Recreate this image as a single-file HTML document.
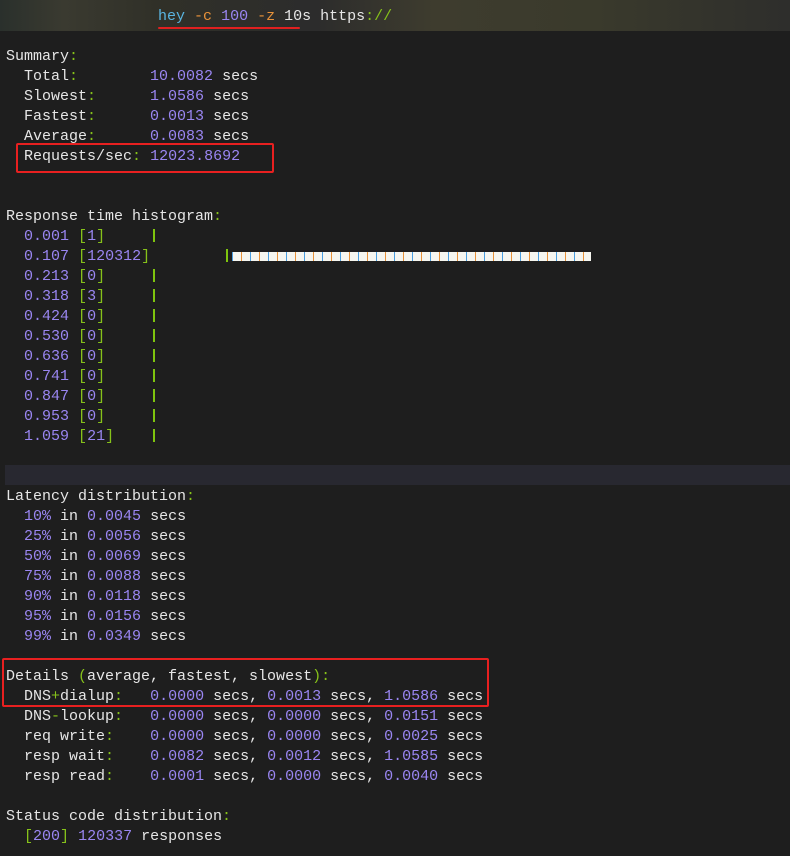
<!DOCTYPE html>
<html><head><style>
html,body{margin:0;padding:0;background:#1e1e1e;width:790px;height:856px;overflow:hidden;position:relative}
pre{margin:0;position:absolute;left:6px;top:47px;font-family:"Liberation Mono",monospace;font-size:15px;line-height:20px;color:#e6e6e6;letter-spacing:0}
.p{color:#9a86f2}.g{color:#86c21a}.o{color:#e8923a}.c{color:#5ab4e0}
.top{position:absolute;left:0;top:0;width:790px;height:31px;background:linear-gradient(90deg,#2a302c 0,#3a3a30 8%,#303028 20%,#2c2c2c 40%,#3e3c2e 55%,#3a3a2c 75%,#2e2e2c 100%)}
.cmd{position:absolute;left:158px;top:7px;font-family:"Liberation Mono",monospace;font-size:15px;line-height:20px;color:#e6e6e6;white-space:pre}
.ul{position:absolute;left:158px;top:27px;width:142px;height:2px;background:#e02020;border-radius:1px}
.band{position:absolute;left:5px;top:465px;width:785px;height:20px;background:#282830}
.box{position:absolute;border:2px solid #e82020;border-radius:2px}
.bar{position:absolute;left:232px;top:252px;width:359px;height:9px;background:repeating-linear-gradient(90deg,#4a9ee0 0,#4a9ee0 1px,#f6f6f0 1px,#f6f6f0 9px,#e8923a 9px,#e8923a 10px,#f6f6f0 10px,#f6f6f0 18px)}
.vb{position:absolute;width:2px;height:13px;background:#7ec40e}
</style></head><body>
<div class="top"></div>
<div class="cmd"><span class="c">hey</span> <span class="o">-c</span> <span class="p">100</span> <span class="o">-z</span> 10s https<span class="g">://</span></div>
<div class="ul"></div>
<div class="band"></div>
<pre>Summary<span class="g">:</span>
  Total<span class="g">:</span>        <span class="p">10.0082</span> secs
  Slowest<span class="g">:</span>      <span class="p">1.0586</span> secs
  Fastest<span class="g">:</span>      <span class="p">0.0013</span> secs
  Average<span class="g">:</span>      <span class="p">0.0083</span> secs
  Requests/sec<span class="g">:</span> <span class="p">12023.8692</span>


Response time histogram<span class="g">:</span>
  <span class="p">0.001</span> <span class="g">[</span><span class="p">1</span><span class="g">]</span>
  <span class="p">0.107</span> <span class="g">[</span><span class="p">120312</span><span class="g">]</span>
  <span class="p">0.213</span> <span class="g">[</span><span class="p">0</span><span class="g">]</span>
  <span class="p">0.318</span> <span class="g">[</span><span class="p">3</span><span class="g">]</span>
  <span class="p">0.424</span> <span class="g">[</span><span class="p">0</span><span class="g">]</span>
  <span class="p">0.530</span> <span class="g">[</span><span class="p">0</span><span class="g">]</span>
  <span class="p">0.636</span> <span class="g">[</span><span class="p">0</span><span class="g">]</span>
  <span class="p">0.741</span> <span class="g">[</span><span class="p">0</span><span class="g">]</span>
  <span class="p">0.847</span> <span class="g">[</span><span class="p">0</span><span class="g">]</span>
  <span class="p">0.953</span> <span class="g">[</span><span class="p">0</span><span class="g">]</span>
  <span class="p">1.059</span> <span class="g">[</span><span class="p">21</span><span class="g">]</span>


Latency distribution<span class="g">:</span>
  <span class="p">10%</span> in <span class="p">0.0045</span> secs
  <span class="p">25%</span> in <span class="p">0.0056</span> secs
  <span class="p">50%</span> in <span class="p">0.0069</span> secs
  <span class="p">75%</span> in <span class="p">0.0088</span> secs
  <span class="p">90%</span> in <span class="p">0.0118</span> secs
  <span class="p">95%</span> in <span class="p">0.0156</span> secs
  <span class="p">99%</span> in <span class="p">0.0349</span> secs

Details <span class="g">(</span>average, fastest, slowest<span class="g">):</span>
  DNS<span class="g">+</span>dialup<span class="g">:</span>   <span class="p">0.0000</span> secs, <span class="p">0.0013</span> secs, <span class="p">1.0586</span> secs
  DNS<span class="g">-</span>lookup<span class="g">:</span>   <span class="p">0.0000</span> secs, <span class="p">0.0000</span> secs, <span class="p">0.0151</span> secs
  req write<span class="g">:</span>    <span class="p">0.0000</span> secs, <span class="p">0.0000</span> secs, <span class="p">0.0025</span> secs
  resp wait<span class="g">:</span>    <span class="p">0.0082</span> secs, <span class="p">0.0012</span> secs, <span class="p">1.0585</span> secs
  resp read<span class="g">:</span>    <span class="p">0.0001</span> secs, <span class="p">0.0000</span> secs, <span class="p">0.0040</span> secs

Status code distribution<span class="g">:</span>
  <span class="g">[</span><span class="p">200</span><span class="g">]</span> <span class="p">120337</span> responses
</pre>
<div class="vb" style="left:153px;top:229px"></div>
<div class="vb" style="left:226px;top:249px"></div>
<div class="vb" style="left:153px;top:269px"></div>
<div class="vb" style="left:153px;top:289px"></div>
<div class="vb" style="left:153px;top:309px"></div>
<div class="vb" style="left:153px;top:329px"></div>
<div class="vb" style="left:153px;top:349px"></div>
<div class="vb" style="left:153px;top:369px"></div>
<div class="vb" style="left:153px;top:389px"></div>
<div class="vb" style="left:153px;top:409px"></div>
<div class="vb" style="left:153px;top:429px"></div>
<div class="bar"></div>
<div class="box" style="left:16px;top:143px;width:254px;height:26px"></div>
<div class="box" style="left:2px;top:658px;width:483px;height:45px"></div>
</body></html>
